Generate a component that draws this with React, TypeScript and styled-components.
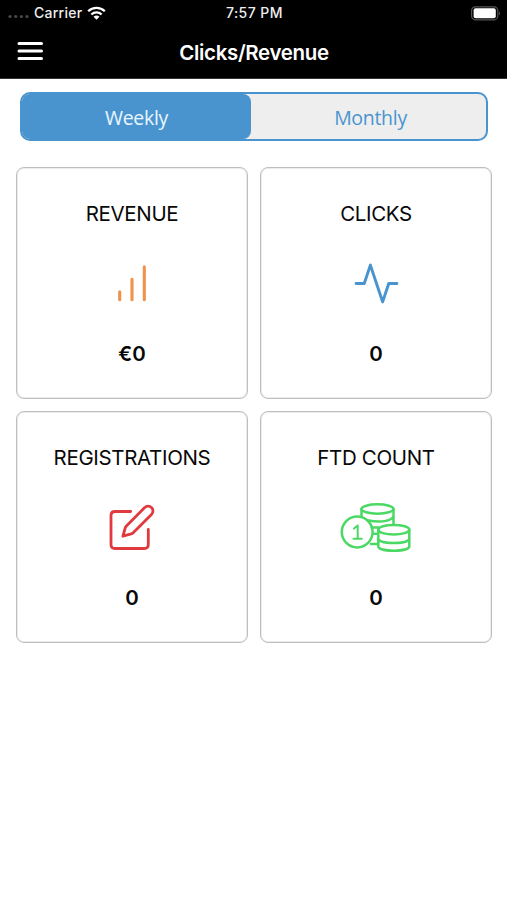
import React from "react";
import styled, { createGlobalStyle } from "styled-components";

const GlobalStyle = createGlobalStyle`
  *, *::before, *::after { box-sizing: border-box; }
  body { margin: 0; background: #fff; font-family: Inter, "Liberation Sans", sans-serif; color: #080808; }
`;

const Screen = styled.div`
  display: flex;
  flex-direction: column;
  min-height: 900px;
  background: #fff;
`;

const TopArea = styled.header`
  height: 79px;
  background: #000;
  color: #fff;
  border-bottom: 1px solid #333;
`;

const StatusBar = styled.div`
  display: grid;
  grid-template-columns: 1fr auto 1fr;
  align-items: center;
  height: 26px;
  padding: 0 6px 0 8px;
`;

const StatusText = styled.span<{ $spacing: number }>`
  font-size: 14px;
  font-weight: 500;
  line-height: 20px;
  letter-spacing: ${(p) => p.$spacing}px;
  color: #eee;
`;

const Carrier = styled.div`
  display: flex;
  align-items: center;
  gap: 5px;
`;

const BatteryIcon = styled.svg`
  justify-self: end;
`;

const NavBar = styled.div`
  display: grid;
  grid-template-columns: 1fr auto 1fr;
  align-items: center;
  height: 52px;
  padding: 0 17px;
`;

const MenuButton = styled.button`
  display: flex;
  justify-self: start;
  padding: 0;
  margin-bottom: 3px;
  border: 0;
  background: none;
`;

const Title = styled.h1`
  margin: 1px 0 0 1px;
  font-size: 20.5px;
  line-height: 26px;
  font-weight: 600;
  letter-spacing: -0.35px;
`;

const Segments = styled.div`
  display: flex;
  height: 49px;
  margin: 13px 19px 0 20px;
  border: 2px solid #4994cf;
  border-radius: 10px;
  background: #eee;
`;

const Segment = styled.button<{ $active?: boolean }>`
  flex: ${(p) => (p.$active ? "0 0 229px" : "1")};
  padding: ${(p) => (p.$active ? "2px 0 0" : "2px 0 0 4px")};
  border: 0;
  border-radius: 8px;
  background: ${(p) => (p.$active ? "#4994cf" : "transparent")};
  color: ${(p) => (p.$active ? "#e9f6ff" : "#4994cf")};
  font-family: "Open Sans", "Noto Sans", sans-serif;
  font-size: 19.5px;
  letter-spacing: -0.3px;
`;

const Cards = styled.main`
  display: grid;
  grid-template-columns: repeat(2, 232px);
  grid-auto-rows: 232px;
  gap: 12px;
  padding: 26px 15px 0 16px;
`;

const Card = styled.section`
  display: flex;
  flex-direction: column;
  align-items: center;
  padding-top: 31px;
  border: 1px solid #bebebe;
  box-shadow: inset 0 0 0 1px #ececec;
  border-radius: 8px;
`;

const CardTitle = styled.h2`
  margin: 0;
  font-size: 20.5px;
  line-height: 30px;
  font-weight: 400;
  letter-spacing: -0.35px;
`;

const IconSlot = styled.div`
  display: flex;
  align-items: center;
  justify-content: center;
  height: 60px;
  margin-top: 24px;
`;

const CardValue = styled.p`
  margin: 26px 0 0;
  font-size: 20.5px;
  line-height: 30px;
  font-weight: 600;
`;

const LineIcon = styled.svg`
  display: block;
  fill: none;
  stroke-linecap: round;
  stroke-linejoin: round;
`;

const Signal = () => (
  <svg width="21" height="12" viewBox="0 0 21 12" fill="#4a4a4a">
    {[2, 7.7, 13.4, 19].map((x) => (
      <circle key={x} cx={x} cy="9.5" r="1.6" />
    ))}
  </svg>
);

const Wifi = () => (
  <svg width="19" height="14" viewBox="0 0 19 14" fill="none" stroke="#fff" strokeWidth="2.3">
    <path d="M1.2 5.3a11.8 11.8 0 0 1 16.6 0" />
    <path d="M4.4 8.5a7.3 7.3 0 0 1 10.2 0" />
    <path d="M9.5 13.7L6.5 10.8a4.4 4.4 0 0 1 6 0z" fill="#fff" stroke="none" />
  </svg>
);

const Battery = () => (
  <BatteryIcon width="30" height="15" viewBox="0 0 30 15">
    <rect x="0.6" y="0.8" width="26.2" height="13" rx="3.8" fill="none" stroke="#555" strokeWidth="1.2" />
    <rect x="2.6" y="2.3" width="22.2" height="10" rx="2" fill="#fff" />
    <path d="M28 5.2q2 2.1 0 4.2z" fill="#555" />
  </BatteryIcon>
);

const BarsIcon = () => (
  <LineIcon width="49" height="49" viewBox="0.5 0 49 49" stroke="#f1924b" strokeWidth="3.1">
    <path d="M12.2 40.8v-8M24.5 40.8v-20.5M36.8 40.8v-33" />
  </LineIcon>
);

const PulseIcon = () => (
  <LineIcon width="49" height="49" viewBox="0 0 24 24" stroke="#4994cf" strokeWidth="1.45">
    <path d="M22 12h-4l-3 9L9 3l-3 9H2" />
  </LineIcon>
);

const EditIcon = () => (
  <LineIcon width="48" height="48" viewBox="108 502.5 48 48" stroke="#e03a3e" strokeWidth="2.8">
    <path d="M130.7 511H115q-4 0-4 4v29q0 4 4 4h29.3q4 0 4-4v-15" />
    <path d="M122.9 535.700l2.300-8.200q.3-1.200 1.200-2.100l18.300-18.300a4.700 4.700 0 0 1 6.800 0 4.700 4.700 0 0 1 0 6.800l-18.300 18.300q-.8.8-2 1.100z" />
  </LineIcon>
);

const CoinsIcon = () => (
  <LineIcon width="74" height="52" viewBox="339.5 501 74 52" stroke="#4bd964" strokeWidth="2.5">
    <ellipse cx="378" cy="509" rx="16" ry="4.7" />
    <path d="M362 509v7M394 509v15M368 520.3q16 3 23.5-1.3q2.500-1.500 2.500-3" />
    <path d="M372 527.500h7M374 533.800h4.500M371.500 544h7" />
    <circle cx="357.7" cy="532" r="15.4" />
    <path d="M354.500 528.500l3.700-3v13.300M354 538.800h8.300" strokeWidth="2" />
    <ellipse cx="394.3" cy="529.7" rx="15.5" ry="4.8" />
    <path d="M378.800 529.700v16.500c0 6 31 6 31 0v-16.500M378.800 538.500c0 6 31 6 31 0" />
  </LineIcon>
);

const metrics = [
  { title: "REVENUE", value: "€0", Icon: BarsIcon },
  { title: "CLICKS", value: "0", Icon: PulseIcon },
  { title: "REGISTRATIONS", value: "0", Icon: EditIcon },
  { title: "FTD COUNT", value: "0", Icon: CoinsIcon },
];

export default function App() {
  return (
    <Screen>
      <GlobalStyle />
      <TopArea>
        <StatusBar>
          <Carrier>
            <Signal />
            <StatusText $spacing={0.25}>Carrier</StatusText>
            <Wifi />
          </Carrier>
          <StatusText $spacing={0.45}>7:57 PM</StatusText>
          <Battery />
        </StatusBar>
        <NavBar>
          <MenuButton aria-label="Menu">
            <svg width="26" height="20" viewBox="0 0 26 20" stroke="#fff" strokeWidth="3" strokeLinecap="round">
              <path d="M2 2.500h22.500M2 10h22.500M2 17.500h22.500" />
            </svg>
          </MenuButton>
          <Title>Clicks/Revenue</Title>
        </NavBar>
      </TopArea>
      <Segments>
        <Segment $active>Weekly</Segment>
        <Segment>Monthly</Segment>
      </Segments>
      <Cards>
        {metrics.map(({ title, value, Icon }) => (
          <Card key={title}>
            <CardTitle>{title}</CardTitle>
            <IconSlot>
              <Icon />
            </IconSlot>
            <CardValue>{value}</CardValue>
          </Card>
        ))}
      </Cards>
    </Screen>
  );
}
